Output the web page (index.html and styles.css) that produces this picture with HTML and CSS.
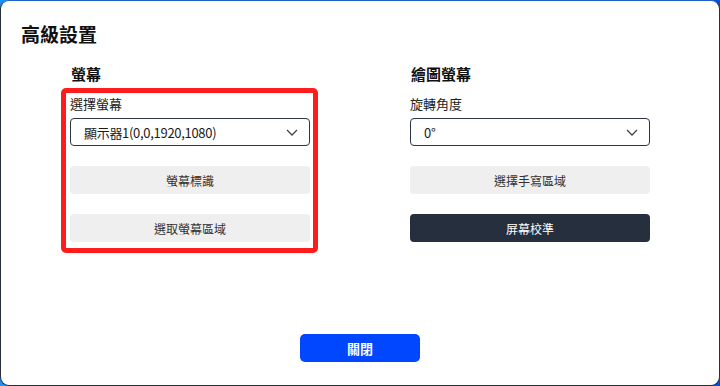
FILE: index.html
```html
<!DOCTYPE html>
<html lang="zh-Hant">
<head>
<meta charset="utf-8">
<title>高級設置</title>
<link rel="stylesheet" href="styles.css">
</head>
<body>
<div class="window">
  <h1 class="title">高級設置</h1>
  <div class="columns">
    <section class="col">
      <h2 class="heading">螢幕</h2>
      <div class="label">選擇螢幕</div>
      <div class="select">
        <span class="select-value">顯示器1(0,0,1920,1080)</span>
        <svg class="chevron" width="12" height="7" viewBox="0 0 12 7"><polyline points="1,1 6,6 11,1" fill="none" stroke="#444" stroke-width="1.3"/></svg>
      </div>
      <button class="btn btn-light">螢幕標識</button>
      <button class="btn btn-light">選取螢幕區域</button>
      <div class="highlight"></div>
    </section>
    <section class="col">
      <h2 class="heading">繪圖螢幕</h2>
      <div class="label">旋轉角度</div>
      <div class="select">
        <span class="select-value">0°</span>
        <svg class="chevron" width="12" height="7" viewBox="0 0 12 7"><polyline points="1,1 6,6 11,1" fill="none" stroke="#444" stroke-width="1.3"/></svg>
      </div>
      <button class="btn btn-light">選擇手寫區域</button>
      <button class="btn btn-dark">屏幕校準</button>
    </section>
  </div>
  <div class="footer">
    <button class="btn-close">關閉</button>
  </div>
</div>
</body>
</html>
```

FILE: styles.css
```css
html, body {
  margin: 0;
  padding: 0;
}
body {
  width: 720px;
  height: 386px;
  overflow: hidden;
  background: linear-gradient(90deg, #1c8ff0 0%, #0a60dc 60%, #0050d4 100%);
  font-family: "Noto Sans CJK TC", "Noto Sans", sans-serif;
  color: #1a1a1a;
}
.window {
  box-sizing: border-box;
  width: 720px;
  height: 386px;
  background: #fff;
  border: 1px solid #262f3c;
  border-top-color: #1f5fc8;
  border-radius: 9px;
  padding-top: 19px;
}
.title {
  margin: 0;
  padding-left: 20px;
  font-size: 19px;
  line-height: 28px;
  font-weight: 700;
  color: #111;
}
.columns {
  display: flex;
  justify-content: center;
  gap: 100px;
  margin-top: 16px;
}
.col {
  position: relative;
  width: 240px;
  display: flex;
  flex-direction: column;
}
.heading {
  margin: 0;
  font-size: 15px;
  line-height: 20px;
  font-weight: 700;
  color: #111;
  padding-left: 1px;
}
.label {
  margin-top: 11px;
  font-size: 13px;
  line-height: 18px;
  color: #222;
}
.select {
  box-sizing: border-box;
  margin-top: 5px;
  height: 28px;
  border: 1px solid #2c3542;
  border-radius: 4px;
  display: flex;
  align-items: center;
  justify-content: space-between;
  padding: 0 11px 0 13px;
}
.select-value {
  font-size: 13px;
  letter-spacing: -0.3px;
  color: #1a1a1a;
}
.chevron {
  display: block;
}
.btn {
  box-sizing: border-box;
  margin-top: 20px;
  height: 28px;
  border: none;
  border-radius: 4px;
  font-family: inherit;
  font-size: 12px;
  padding: 0;
  cursor: pointer;
}
.btn-light {
  background: #efefef;
  color: #333;
}
.btn-dark {
  background: #252f3d;
  color: #fff;
}
.highlight {
  position: absolute;
  left: -9px;
  top: 24px;
  width: 257px;
  height: 165px;
  box-sizing: border-box;
  border: 5px solid #ff1c1c;
  border-radius: 5px;
  pointer-events: none;
}
.footer {
  display: flex;
  justify-content: center;
  margin-top: 92px;
}
.btn-close {
  width: 120px;
  height: 28px;
  border: none;
  border-radius: 5px;
  background: #0047ff;
  color: #fff;
  font-family: inherit;
  font-size: 13px;
  font-weight: 700;
  padding: 0;
}
```
